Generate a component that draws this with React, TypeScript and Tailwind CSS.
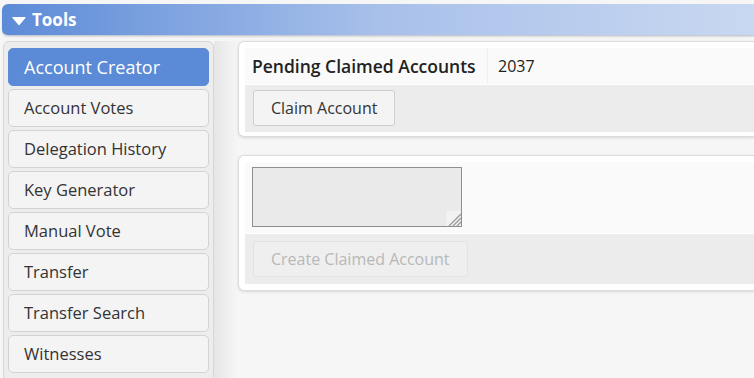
import React from "react";

const tools = [
  "Account Creator",
  "Account Votes",
  "Delegation History",
  "Key Generator",
  "Manual Vote",
  "Transfer",
  "Transfer Search",
  "Witnesses",
];

export default function App() {
  return (
    <div className="w-[754px] h-[378px] overflow-hidden bg-[#f6f6f6] text-[#333] font-['Open_Sans',sans-serif] pt-1">
      <div className="ml-[2px] h-8 flex items-center gap-1.5 pl-[10px] rounded-l-md bg-gradient-to-r from-[#5c8bd7] via-[#a8c0ea] to-[#c9d8f1] border-b border-[#c6cbd3] shadow-[0_1px_2px_rgba(0,0,0,0.12)]">
        <svg width="14" height="10" viewBox="0 0 14 10" className="mt-[2px]">
          <path d="M1 1.5 H13 L7 8.5 Z" fill="#fff" stroke="#fff" strokeLinejoin="round" strokeWidth="1.2" />
        </svg>
        <span className="text-white font-bold text-[17px]">Tools</span>
      </div>

      <div className="flex mt-[5px]">
        <div className="ml-[3px] w-[211px] h-[340px] shrink-0 rounded-md border border-[#d6d6d6] bg-[#ededed] px-1 pt-[6px] flex flex-col gap-[3px]">
          {tools.map((t, i) => (
            <div
              key={t}
              className={
                i === 0
                  ? "h-[38px] shrink-0 flex items-center pl-[15px] rounded-[5px] border border-[#5b8ad6] bg-[#5b8ad6] text-white text-[18px]"
                  : "h-[38px] shrink-0 flex items-center pl-[15px] rounded-[5px] border border-[#d3d3d3] bg-[#f4f4f4] text-[#333] text-[16.5px]"
              }
            >
              {t}
            </div>
          ))}
        </div>

        <div className="flex-1 pl-6 bg-gradient-to-r from-[#e6e6e6] to-[#f6f6f6] to-[24px] flex flex-col gap-[18px]">
          <div className="h-[96px] rounded-l-md border border-r-0 border-[#dcdcdc] bg-white p-[6px] pr-0 shadow-[0_1px_3px_rgba(0,0,0,0.12)]">
            <div className="flex h-9 bg-[#fafafa] items-center">
              <div className="w-[243px] h-full flex items-center pl-[7px] font-semibold text-[17.5px] text-[#222] border-r border-[#efefef]">
                Pending Claimed Accounts
              </div>
              <div className="pl-[10px] text-[16px] text-[#222]">2037</div>
            </div>
            <div className="h-[47px] mt-[1px] bg-[#ececec] pl-[8px] pt-[5px]">
              <button className="h-9 px-[17px] rounded-[3px] border border-[#cfcfcf] bg-[#f4f4f4] text-[16px] text-[#333]">
                Claim Account
              </button>
            </div>
          </div>

          <div className="h-[136px] rounded-l-md border border-r-0 border-[#dcdcdc] bg-white p-[6px] pr-0 shadow-[0_1px_3px_rgba(0,0,0,0.12)]">
            <div className="h-[71px] bg-[#fafafa] pl-[7px] pt-[5px]">
              <div className="relative w-[210px] h-[60px]">
                <textarea
                  disabled
                  className="w-full h-full border border-[#8e8e8e] bg-[#eaeaea] resize-none block"
                />
                <svg width="15" height="15" viewBox="0 0 15 15" className="absolute right-[1px] bottom-[1px]">
                  <rect width="15" height="15" fill="#f2f2f2" />
                  <path d="M3 15 L15 3 M7 15 L15 7 M11 15 L15 11" stroke="#9a9a9a" strokeWidth="1.3" />
                </svg>
              </div>
            </div>
            <div className="h-[50px] mt-[1px] bg-[#ececec] pl-[8px] pt-[7px]">
              <button
                disabled
                className="h-9 px-[17px] rounded-[3px] border border-[#e3e3e3] bg-[#efefef] text-[16px] text-[#b8b8b8]"
              >
                Create Claimed Account
              </button>
            </div>
          </div>
        </div>
      </div>
    </div>
  );
}
